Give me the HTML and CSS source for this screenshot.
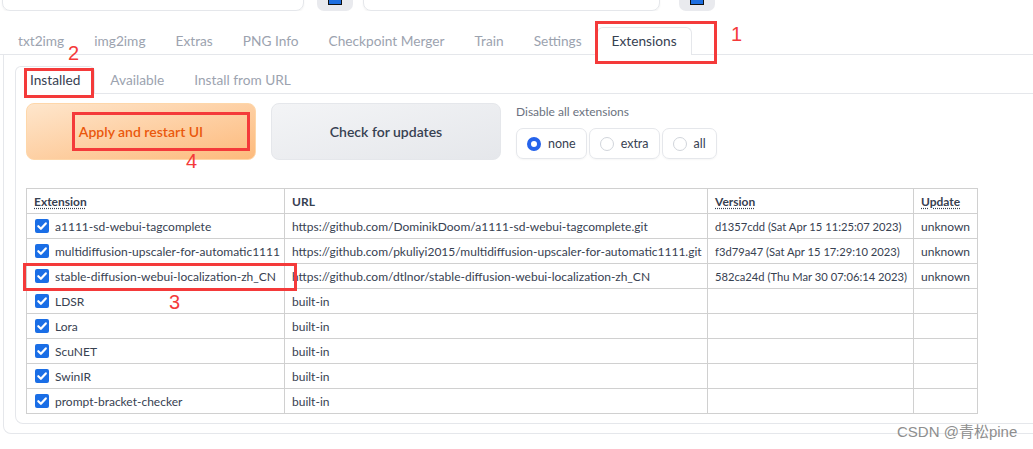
FILE: index.html
```html
<!DOCTYPE html>
<html>
<head>
<meta charset="utf-8">
<link rel="stylesheet" href="styles.css">
</head>
<body>
<div class="page">
  <div class="topbar">
    <div class="dropdown"><span class="dd-text">sd-v1-5-pruned-emaonly.safetensors [6ce0161689]</span></div>
    <div class="iconbtn"><span class="blue-icon"></span></div>
    <div class="dropdown dropdown2"></div>
    <div class="iconbtn iconbtn2"><span class="blue-icon"></span></div>
  </div>

  <div class="tabs">
    <div class="tab">txt2img</div>
    <div class="tab">img2img</div>
    <div class="tab">Extras</div>
    <div class="tab">PNG Info</div>
    <div class="tab">Checkpoint Merger</div>
    <div class="tab">Train</div>
    <div class="tab">Settings</div>
    <div class="tab selected">Extensions</div>
  </div>

  <div class="outer-panel">
    <div class="subtabs">
      <div class="tab selected">Installed</div>
      <div class="tab">Available</div>
      <div class="tab">Install from URL</div>
    </div>
    <div class="inner-panel">
      <div class="controls">
        <button class="btn btn-primary">Apply and restart UI</button>
        <button class="btn btn-secondary">Check for updates</button>
        <div class="disable-group">
          <div class="disable-label">Disable all extensions</div>
          <div class="radios">
            <label class="radio"><span class="dot checked"></span>none</label>
            <label class="radio"><span class="dot"></span>extra</label>
            <label class="radio"><span class="dot"></span>all</label>
          </div>
        </div>
      </div>

      <table class="ext-table">
        <colgroup>
          <col class="c1"><col class="c2"><col class="c3"><col class="c4">
        </colgroup>
        <thead>
          <tr>
            <th><abbr>Extension</abbr></th>
            <th>URL</th>
            <th><abbr>Version</abbr></th>
            <th><abbr>Update</abbr></th>
          </tr>
        </thead>
        <tbody>
          <tr>
            <td><span class="cb"><svg viewBox="0 0 14 14"><path d="M3.3 7.2 L5.9 9.8 L10.8 4.4" /></svg></span>a1111-sd-webui-tagcomplete</td>
            <td>https://github.com/DominikDoom/a1111-sd-webui-tagcomplete.git</td>
            <td class="ver">d1357cdd (Sat Apr 15 11:25:07 2023)</td>
            <td>unknown</td>
          </tr>
          <tr>
            <td><span class="cb"><svg viewBox="0 0 14 14"><path d="M3.3 7.2 L5.9 9.8 L10.8 4.4" /></svg></span>multidiffusion-upscaler-for-automatic1111</td>
            <td>https://github.com/pkuliyi2015/multidiffusion-upscaler-for-automatic1111.git</td>
            <td class="ver">f3d79a47 (Sat Apr 15 17:29:10 2023)</td>
            <td>unknown</td>
          </tr>
          <tr>
            <td><span class="cb"><svg viewBox="0 0 14 14"><path d="M3.3 7.2 L5.9 9.8 L10.8 4.4" /></svg></span>stable-diffusion-webui-localization-zh_CN</td>
            <td>https://github.com/dtlnor/stable-diffusion-webui-localization-zh_CN</td>
            <td class="ver">582ca24d (Thu Mar 30 07:06:14 2023)</td>
            <td>unknown</td>
          </tr>
          <tr>
            <td><span class="cb"><svg viewBox="0 0 14 14"><path d="M3.3 7.2 L5.9 9.8 L10.8 4.4" /></svg></span>LDSR</td>
            <td>built-in</td><td></td><td></td>
          </tr>
          <tr>
            <td><span class="cb"><svg viewBox="0 0 14 14"><path d="M3.3 7.2 L5.9 9.8 L10.8 4.4" /></svg></span>Lora</td>
            <td>built-in</td><td></td><td></td>
          </tr>
          <tr>
            <td><span class="cb"><svg viewBox="0 0 14 14"><path d="M3.3 7.2 L5.9 9.8 L10.8 4.4" /></svg></span>ScuNET</td>
            <td>built-in</td><td></td><td></td>
          </tr>
          <tr>
            <td><span class="cb"><svg viewBox="0 0 14 14"><path d="M3.3 7.2 L5.9 9.8 L10.8 4.4" /></svg></span>SwinIR</td>
            <td>built-in</td><td></td><td></td>
          </tr>
          <tr>
            <td><span class="cb"><svg viewBox="0 0 14 14"><path d="M3.3 7.2 L5.9 9.8 L10.8 4.4" /></svg></span>prompt-bracket-checker</td>
            <td>built-in</td><td></td><td></td>
          </tr>
        </tbody>
      </table>
    </div>
  </div>

  <div class="mark box1"></div><div class="num n1">1</div>
  <div class="mark box2"></div><div class="num n2">2</div>
  <div class="mark box3"></div><div class="num n3">3</div>
  <div class="mark box4"></div><div class="num n4">4</div>
  <div class="watermark">CSDN @青松pine</div>
</div>
</body>
</html>
```

FILE: styles.css
```css
html, body {
  margin: 0;
  padding: 0;
  background: #ffffff;
  overflow: hidden;
}
body {
  font-family: Lato, "Noto Sans", "Liberation Sans", sans-serif;
  color: #374151;
}
.page {
  position: relative;
  width: 1033px;
  height: 449px;
  overflow: hidden;
}

/* top cut-off row */
.topbar {
  height: 11px;
  overflow: hidden;
  display: flex;
  align-items: flex-end;
  padding-left: 2px;
}
.dropdown {
  box-sizing: border-box;
  width: 302px;
  height: 40px;
  border: 1px solid #e5e7eb;
  border-radius: 8px;
  box-shadow: 0 1px 2px rgba(0,0,0,0.06);
  display: flex;
  align-items: flex-end;
  padding: 0 0 12px 14px;
  flex-shrink: 0;
}
.dd-text {
  font-size: 14px;
  line-height: 14px;
  color: #6b7280;
  white-space: nowrap;
}
.dropdown2 {
  width: 297px;
  margin-left: 10px;
}
.iconbtn {
  box-sizing: border-box;
  width: 36px;
  height: 40px;
  margin-left: 13px;
  border-radius: 7px;
  background: #e9eaee;
  display: flex;
  justify-content: center;
  align-items: flex-end;
  flex-shrink: 0;
}
.iconbtn2 {
  margin-left: 19px;
}
.blue-icon {
  display: block;
  width: 12px;
  height: 10px;
  margin-bottom: 6px;
  background: #1f6fe0;
  border: 1px solid #111;
  border-top: none;
}

/* main tabs */
.tabs {
  display: flex;
  margin-top: 16px;
  padding-left: 3px;
  border-bottom: 1px solid #e5e7eb;
  height: 27px;
}
.tab {
  box-sizing: border-box;
  padding: 0 14px;
  height: 27px;
  line-height: 25px;
  font-size: 13.7px;
  color: #9ca3af;
  border: 1px solid transparent;
  border-bottom: none;
  white-space: nowrap;
}
.tab.selected {
  color: #374151;
  background: #fff;
  border-color: #e5e7eb;
  border-radius: 6px 6px 0 0;
  height: 28px;
  margin-bottom: -1px;
}

/* outer panel */
.outer-panel {
  width: 1060px;
  margin-left: 3px;
  box-sizing: border-box;
  border: 1px solid #e5e7eb;
  border-top: none;
  border-radius: 0 0 8px 8px;
  padding: 11px 0 9px 11px;
}
.subtabs {
  display: flex;
  border-bottom: 1px solid #e5e7eb;
  height: 27px;
}
.inner-panel {
  box-sizing: border-box;
  border: 1px solid #e5e7eb;
  border-top: none;
  border-radius: 0 0 8px 8px;
  padding: 9px 0 9px 10px;
}

/* controls */
.controls {
  display: flex;
  gap: 15px;
  height: 57px;
}
.btn {
  box-sizing: border-box;
  width: 230px;
  height: 57px;
  border-radius: 8px;
  font-family: inherit;
  font-size: 14px;
  font-weight: 600;
  cursor: pointer;
}
.btn-primary {
  border: 1px solid #fed7aa;
  background: linear-gradient(to bottom right, #fee6cc, #fdba7c);
  color: #ea580c;
}
.btn-secondary {
  border: 1px solid #e5e7eb;
  background: linear-gradient(to bottom right, #f3f4f6, #e5e7eb);
  color: #374151;
}
.disable-group {
  display: flex;
  flex-direction: column;
}
.disable-label {
  font-size: 12px;
  line-height: 14px;
  color: #6b7280;
  margin-top: 2px;
}
.radios {
  display: flex;
  gap: 2px;
  margin-top: 9px;
}
.radio {
  box-sizing: border-box;
  height: 31px;
  display: flex;
  align-items: center;
  gap: 7px;
  padding: 0 10px 0 10px;
  border: 1px solid #e5e7eb;
  border-radius: 7px;
  font-size: 12.5px;
  color: #374151;
  box-shadow: 0 1px 2px rgba(0,0,0,0.04);
}
.dot {
  box-sizing: border-box;
  width: 14px;
  height: 14px;
  border-radius: 50%;
  border: 1px solid #d1d5db;
  background: #fff;
}
.dot.checked {
  border: 4px solid #2563eb;
  background: #fff;
}

/* table */
.ext-table {
  margin-top: 28px;
  border-collapse: collapse;
  width: 951px;
  font-size: 12px;
  color: #374151;
  table-layout: fixed;
}
.c1 { width: 258px; }
.c2 { width: 423px; }
.c3 { width: 206px; }
.c4 { width: 64px; }
.ext-table th,
.ext-table td {
  border: 1px solid #d0d0d0;
  height: 24px;
  padding: 0 0 0 7px;
  text-align: left;
  white-space: nowrap;
  overflow: hidden;
  vertical-align: middle;
}
.ext-table td.ver {
  font-size: 11.2px;
}
.ext-table th {
  font-weight: 700;
}
abbr {
  text-decoration: underline dotted;
  text-underline-offset: 2px;
}
.cb {
  display: inline-block;
  vertical-align: middle;
  width: 14px;
  height: 14px;
  border-radius: 2px;
  background: #1a6ee6;
  margin: -2px 6px 0 1px;
}
.cb svg {
  display: block;
  width: 14px;
  height: 14px;
}
.cb path {
  fill: none;
  stroke: #fff;
  stroke-width: 2.2;
  stroke-linecap: round;
  stroke-linejoin: round;
}

/* annotations */
.mark {
  position: absolute;
  box-sizing: border-box;
  border: 3px solid #f43a3a;
}
.box1 { left: 595px; top: 21px; width: 122px; height: 43px; }
.box2 { left: 24px; top: 68px; width: 70px; height: 30px; }
.box3 { left: 23px; top: 263px; width: 274px; height: 28px; }
.box4 { left: 72px; top: 112px; width: 178px; height: 39px; }
.num {
  position: absolute;
  font-family: "Liberation Sans", Arial, sans-serif;
  font-size: 20px;
  line-height: 20px;
  color: #f43a3a;
}
.n1 { left: 731px; top: 24px; }
.n2 { left: 68px; top: 43px; }
.n3 { left: 169px; top: 292px; }
.n4 { left: 186px; top: 151px; }
.watermark {
  position: absolute;
  left: 897px;
  top: 423px;
  font-family: "Liberation Sans", "Noto Sans CJK SC", sans-serif;
  font-size: 15px;
  line-height: 18px;
  color: #8e8e8e;
  white-space: nowrap;
}
```
